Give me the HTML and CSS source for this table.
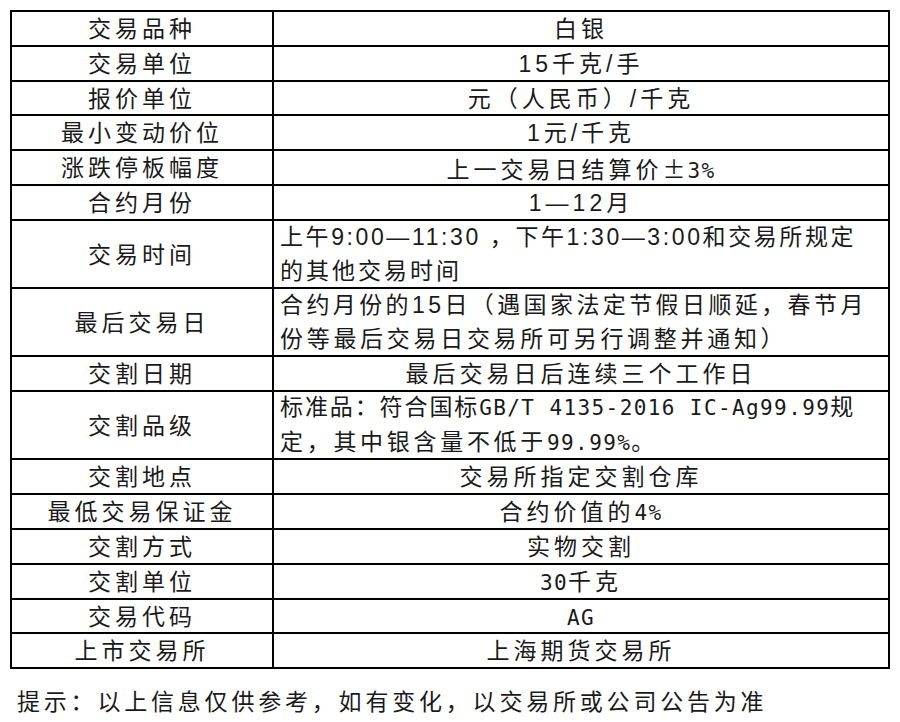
FILE: index.html
```html
<!DOCTYPE html>
<html lang="zh-CN">
<head>
<meta charset="utf-8">
<title>白银期货合约</title>
<link rel="stylesheet" href="styles.css">
</head>
<body>
<div class="sheet">
  <div class="k">交易品种</div><div class="v">白银</div>
  <div class="k">交易单位</div><div class="v">15千克/手</div>
  <div class="k">报价单位</div><div class="v">元（人民币）/千克</div>
  <div class="k">最小变动价位</div><div class="v">1元/千克</div>
  <div class="k">涨跌停板幅度</div><div class="v">上一交易日结算价<span class="pm">±</span><span class="mono">3%</span></div>
  <div class="k">合约月份</div><div class="v">1—12月</div>
  <div class="k dbl">交易时间</div><div class="v multi"><span class="l ls26">上午9:00—11:30 ，下午1:30—3:00和交易所规定</span><span class="l ls30">的其他交易时间</span></div>
  <div class="k dbl">最后交易日</div><div class="v multi"><span class="l ls34">合约月份的15日（遇国家法定节假日顺延，春节月</span><span class="l ls37">份等最后交易日交易所可另行调整并通知）</span></div>
  <div class="k">交割日期</div><div class="v">最后交易日后连续三个工作日</div>
  <div class="k dbl">交割品级</div><div class="v multi"><span class="l ls19">标准品：符合国标<span class="mono">GB/T 4135-2016 IC-Ag99.99</span>规</span><span class="l ls37">定，其中银含量不低于<span class="mono">99.99%</span>。</span></div>
  <div class="k">交割地点</div><div class="v">交易所指定交割仓库</div>
  <div class="k">最低交易保证金</div><div class="v">合约价值的<span class="mono">4%</span></div>
  <div class="k">交割方式</div><div class="v">实物交割</div>
  <div class="k">交割单位</div><div class="v"><span class="mono">30</span>千克</div>
  <div class="k">交易代码</div><div class="v"><span class="mono">AG</span></div>
  <div class="k">上市交易所</div><div class="v">上海期货交易所</div>
</div>
<p class="note">提示：以上信息仅供参考，如有变化，以交易所或公司公告为准</p>
</body>
</html>
```
FILE: styles.css
```css
html, body {
  margin: 0;
  padding: 0;
  background: #ffffff;
}

body {
  font-family: "Liberation Sans", "Noto Sans CJK SC", sans-serif;
  font-size: 23px;
  color: #1a1a1a;
}

.sheet {
  display: grid;
  grid-template-columns: 262px 616px;
  width: max-content;
  margin: 10px 0 0 10px;
  border-top: 2px solid #000;
  border-left: 2px solid #000;
}

.k,
.v {
  border-right: 2px solid #000;
  border-bottom: 2px solid #000;
  height: 32.8px;
  line-height: 34px;
  letter-spacing: 4px;
  white-space: nowrap;
  text-align: center;
  overflow: hidden;
}

.k.dbl {
  height: 66.3px;
  line-height: 68px;
}

.v.multi {
  height: 66.3px;
  text-align: left;
  padding-left: 6px;
  display: flex;
  flex-direction: column;
  justify-content: center;
  line-height: 34px;
}

.l {
  display: block;
}

.ls19 { letter-spacing: 1.9px; }
.ls26 { letter-spacing: 2.6px; }
.ls30 { letter-spacing: 3px; }
.ls34 { letter-spacing: 3.4px; }
.ls37 { letter-spacing: 3.7px; }

.pm {
  font-family: "Noto Sans CJK SC", sans-serif;
  letter-spacing: 2px;
}

.mono {
  font-family: "DejaVu Sans Mono", monospace;
  font-size: 21px;
  letter-spacing: 1.4px;
}

.note {
  margin: 18px 0 0 17px;
  line-height: 30px;
  letter-spacing: 3.8px;
  white-space: nowrap;
}
```
